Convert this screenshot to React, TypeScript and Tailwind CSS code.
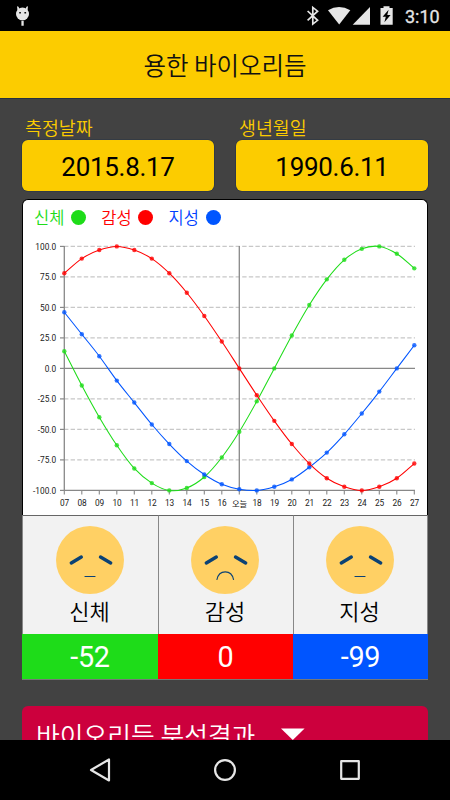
import React from "react";

const KR = "font-['Noto_Sans_CJK_KR',sans-serif]";
const ROBOTO = "font-['Roboto','Noto_Sans_CJK_KR',sans-serif]";

const GREEN = "#1edc19";
const RED = "#ff0000";
const BLUE = "#0055ff";

const series = [
  { color: GREEN, values: [14, -14, -40, -63, -82, -94, -100, -98, -89, -73, -52, -27, 0, 27, 52, 73, 89, 98, 100, 94, 82] },
  { color: BLUE, values: [46, 28, 10, -10, -28, -46, -62, -76, -87, -95, -99, -100, -97, -91, -81, -69, -54, -37, -19, 0, 19] },
  { color: RED, values: [78, 90, 97, 100, 97, 90, 78, 62, 43, 22, 0, -22, -43, -62, -78, -90, -97, -100, -97, -90, -78] },
];

const px = (i: number) => 41.3 + i * 17.5;
const py = (v: number) => 138.4 - v * 1.22;

// Cubic curve through every reading, with tangents taken from the neighbours;
// the end readings are extended in a straight line.
function curve(values: number[]) {
  const n = values.length;
  let d = `M${px(0)} ${py(values[0])}`;
  for (let i = 0; i < n - 1; i++) {
    const before = i > 0 ? values[i - 1] : 2 * values[0] - values[1];
    const after = i < n - 2 ? values[i + 2] : 2 * values[n - 1] - values[n - 2];
    const c1 = py(values[i] + (values[i + 1] - before) / 6);
    const c2 = py(values[i + 1] - (after - values[i]) / 6);
    d += ` C${px(i) + 5.83} ${c1} ${px(i + 1) - 5.83} ${c2} ${px(i + 1)} ${py(values[i + 1])}`;
  }
  return d;
}

function Chart() {
  const levels = [100, 75, 50, 25, 0, -25, -50, -75, -100];
  return (
    <svg className={`block h-[285px] w-[405px] ${ROBOTO}`} viewBox="0 0 405 285">
      {levels.map((v) => (
        <g key={v}>
          {v !== 0 && v !== -100 && (
            <line x1={41} x2={392} y1={py(v)} y2={py(v)} stroke="#c8c8c8" strokeWidth={1.3} strokeDasharray="4.4 2.2" />
          )}
          <line x1={37} x2={41} y1={py(v)} y2={py(v)} stroke="#888" strokeWidth={1.2} />
          <text x={33.2} y={py(v) + 3.3} fontSize={8.3} textAnchor="end" fill="#222">
            {v.toFixed(1)}
          </text>
        </g>
      ))}
      <line x1={41.3} x2={41.3} y1={16} y2={261} stroke="#888" strokeWidth={1.3} />
      <line x1={216.3} x2={216.3} y1={16} y2={261} stroke="#888" strokeWidth={1.3} />
      <line x1={41} x2={392} y1={138.4} y2={138.4} stroke="#888" strokeWidth={1.3} />
      <line x1={41} x2={392} y1={260.4} y2={260.4} stroke="#888" strokeWidth={1.3} />
      {series[0].values.map((_, i) => (
        <g key={i}>
          <line x1={px(i)} x2={px(i)} y1={260} y2={264.5} stroke="#888" strokeWidth={1.1} />
          <text x={px(i) + 0.3} y={i === 10 ? 276.6 : 275.5} fontSize={8.3} textAnchor="middle" fill="#222">
            {i === 10 ? "오늘" : String(i + 7).padStart(2, "0")}
          </text>
        </g>
      ))}
      {series.map((s) => (
        <g key={s.color} fill={s.color}>
          <path d={curve(s.values)} fill="none" stroke={s.color} strokeWidth={1.05} />
          {s.values.map((v, i) => (
            <circle key={i} cx={px(i)} cy={py(v)} r={2.2} fillOpacity={0.8} />
          ))}
        </g>
      ))}
    </svg>
  );
}

function Face({ frown }: { frown?: boolean }) {
  return (
    <svg className="h-[68px] w-[68px]" viewBox="0 0 68 68" fill="none" stroke="#0b4275" strokeLinecap="round">
      <circle cx="34" cy="34" r="34" fill="#ffd064" stroke="none" />
      <path d="M15.3 37 25.3 31M44.5 31l10.2 6" strokeWidth="3.4" />
      {frown ? (
        <path d="M26 53.5C28 43.3 40.5 43.3 42.5 53.5" strokeWidth="1.2" />
      ) : (
        <path d="M29 50.5h10" strokeWidth="1.2" />
      )}
    </svg>
  );
}

function Legend({ label, text, dot }: { label: string; text: string; dot: string }) {
  return (
    <div className="flex w-[67.3px] items-center">
      <span className={`w-[37px] text-[16.5px] font-[350] leading-5 ${text}`}>{label}</span>
      <span className={`size-[15px] rounded-full ${dot}`} />
    </div>
  );
}

function DateField({ label, value }: { label: string; value: string }) {
  return (
    <div className="w-[192px]">
      <div className={`h-[26px] pl-[3px] text-[18.4px] font-[350] leading-[26px] text-[#fccc00] ${KR}`}>{label}</div>
      <div className={`flex h-[51px] items-center justify-center rounded-[6px] bg-[#fccc00] pt-[4px] text-[26px] tracking-[-0.3px] text-black shadow-[0_0_0_0.6px_#273447] ${ROBOTO}`}>
        {value}
      </div>
    </div>
  );
}

function StatusBar() {
  return (
    <div className="flex h-[31px] shrink-0 bg-black">
      <svg className="h-[31px] w-[450px]" viewBox="0 0 450 31" fill="#e6e6e6">
        <circle cx="22.5" cy="14" r="6.5" />
        <path d="M17 6.3l1.5.4 1.3 3-2.2 1.5zM28 6.3l-1.5.4-1.3 3 2.2 1.5zM21.4 21h2.3v4.8h-2.3z" />
        <path d="M19.2 12h1.7v1.5h-1.7zM24.4 12h1.7v1.5h-1.7z" fill="#111" />
        <path d="M307.6 11l10 9.3-4.8 3.8V7.4l4.8 3.8-10 9.2" fill="none" stroke="#e6e6e6" strokeWidth="1.7" />
        <path d="M328 10.2Q339 3.7 350.3 10.2L339.2 24.4z" />
        <path d="M352.7 24.7H370V7z" />
        <path d="M380.5 8h3V6.2h6V8h3.2v16.7h-12.2z" />
        <path d="M388.6 9.7l-6 7h3.2l-1.4 5.5 6.2-7.3h-3.3z" fill="#000" />
        <text x="405" y="22.6" fontSize="18" stroke="#e6e6e6" strokeWidth="0.3" className={ROBOTO}>3:10</text>
      </svg>
    </div>
  );
}

function ResultCell({ label, value, bg, frown, cell, edge }: { label: string; value: string; bg: string; frown?: boolean; cell: string; edge?: string }) {
  return (
    <div className={`flex flex-col ${cell}`}>
      <div className={`flex h-[119px] flex-col items-center border-l border-t border-[#888] border-t-[#666] bg-[#f2f2f2] pt-[10px] ${edge ?? "pr-[2px]"}`}>
        <Face frown={frown} />
        <div className={`text-[22px] font-[350] leading-[33px] text-black ${KR}`}>{label}</div>
      </div>
      <div className={`flex h-[45px] items-center justify-center pt-[3px] text-[28.8px] tracking-[-0.3px] text-white ${ROBOTO} ${bg}`}>{value}</div>
    </div>
  );
}

export default function App() {
  return (
    <div className="flex h-[800px] w-[450px] flex-col overflow-hidden bg-[#424242]">
      <StatusBar />
      <header className={`flex h-[68px] shrink-0 items-center justify-center border-b border-[#263040] bg-[#fccc00] pt-px text-[24.5px] font-[350] text-[#111] ${KR}`}>
        용한 바이오리듬
      </header>
      <main className="h-[641px] shrink-0 overflow-hidden px-[22px] pt-[15px]">
        <div className="flex justify-between">
          <DateField label="측정날짜" value="2015.8.17" />
          <DateField label="생년월일" value="1990.6.11" />
        </div>
        <section className="mt-[8px] h-[316px] rounded-t-[6px] border border-b-0 border-black bg-white">
          <div className={`flex h-[30px] items-center pl-[11px] pt-[4px] ${KR}`}>
            <Legend label="신체" text="text-[#1edc19]" dot="bg-[#1edc19]" />
            <Legend label="감성" text="text-[#f00]" dot="bg-[#f00]" />
            <Legend label="지성" text="text-[#0040ff]" dot="bg-[#05f]" />
          </div>
          <Chart />
        </section>
        <section className="flex h-[165px] border-b border-[#777]">
          <ResultCell label="신체" value="-52" bg="bg-[#1edc19]" cell="w-[136px]" />
          <ResultCell label="감성" value="0" bg="bg-[#f00]" cell="w-[135px]" frown />
          <ResultCell label="지성" value="-99" bg="bg-[#05f]" cell="w-[135px]" edge="border-r pr-[2px]" />
        </section>
        <section className={`mt-[26px] flex h-[60px] rounded-[6px] bg-[#cc003d] pl-[14px] text-[25.8px] font-[350] leading-[58px] text-white ${KR}`}>
          <span className="w-[245px] whitespace-nowrap">바이오리듬 분석결과</span>
          <svg className="mt-[22px] h-3 w-6" viewBox="0 0 24 12">
            <path d="M0 .4h23.6L11.8 12z" fill="#fff" />
          </svg>
        </section>
      </main>
      <nav className="h-[60px] shrink-0 bg-black">
        <svg className="h-[60px] w-[450px]" viewBox="0 0 450 60" fill="none" stroke="#e6e6e6" strokeWidth="2.2" strokeLinejoin="round">
          <path d="M91 30l18-10.5v21z" />
          <circle cx="225" cy="30" r="9.9" />
          <path d="M341.2 21.2h17.6v17.6h-17.6z" />
        </svg>
      </nav>
    </div>
  );
}
